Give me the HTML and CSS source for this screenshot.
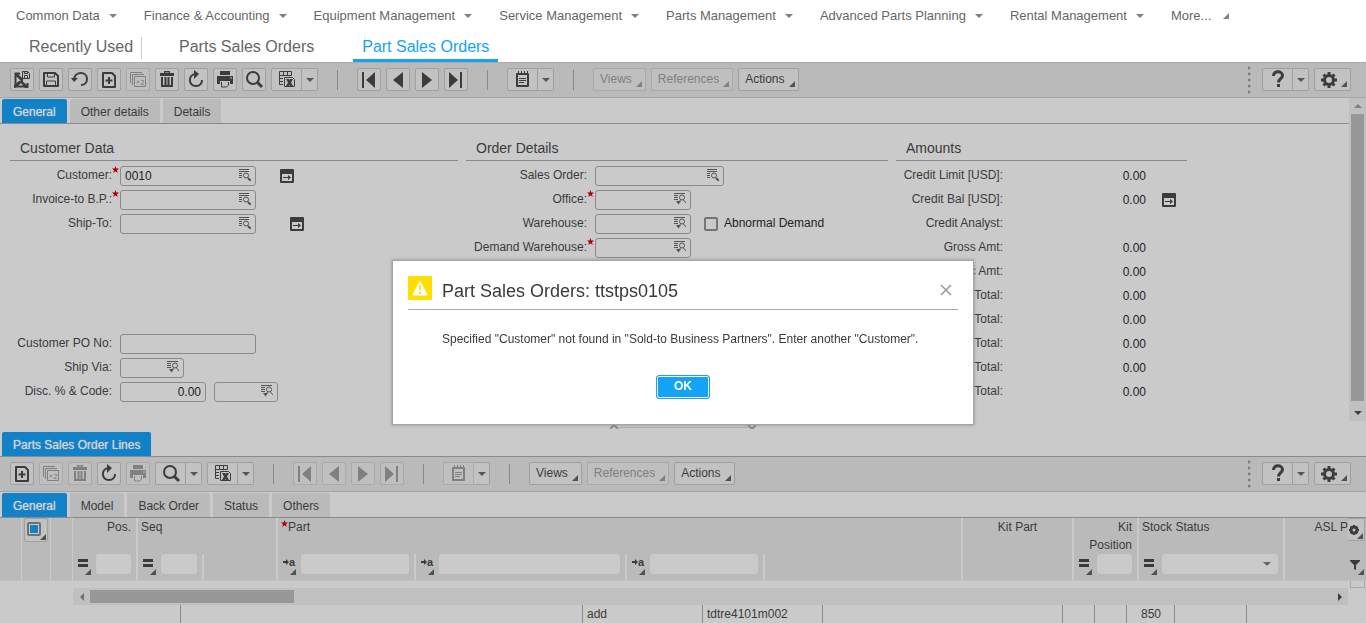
FILE: index.html
```html
<!DOCTYPE html>
<html lang="en">
<head>
<meta charset="utf-8">
<title>Part Sales Orders</title>
<link rel="stylesheet" href="styles.css">
</head>
<body>
<svg class="defs" aria-hidden="true">
  <symbol id="i-saveexit" viewBox="0 0 22 22"><path d="M9 4.500H4.500v13h12V14" fill="none" stroke="currentColor" stroke-width="2"/><path d="M4 5h3l4 4 1-1v5h-1l-4-4-3-3zM3 19v-3l5-4h2l1 1-5 5zM11 12l6 5v2h-3l-4-5z" fill="currentColor"/><path d="M11.500 2.500h5l2 2v5h-7zM13.500 2.500v2h3v-2M13.500 9.500v-3h3v3" fill="none" stroke="currentColor"/></symbol>
  <symbol id="i-save" viewBox="0 0 22 22"><path d="M4 4h11l3 3v10H4z" fill="none" stroke="currentColor" stroke-width="2" stroke-linejoin="round"/><path d="M7.500 4v4h7V4M6.500 17v-5h9v5" fill="none" stroke="currentColor"/></symbol>
  <symbol id="i-undo" viewBox="0 0 22 22"><path d="M5 10C6 2 18 2 18 10c0 4-3 6-6 6" fill="none" stroke="currentColor" stroke-width="2"/><path d="M2 9h7l-4 4z" fill="currentColor"/></symbol>
  <symbol id="i-new" viewBox="0 0 22 22"><path d="M5 4h9l3 3v11H5z" fill="none" stroke="currentColor" stroke-width="2" stroke-linejoin="round"/><path d="M11 8v7M7.500 11.500h7" stroke="currentColor" stroke-width="2"/></symbol>
  <symbol id="i-copy" viewBox="0 0 22 22"><path d="M3.500 14V3.500H15M5.500 16V5.500H17M7.500 7.500h11v10h-11z" fill="none" stroke="currentColor"/><path d="M9.500 11.500l3 3m0-3l-3 3M14 11.500h2.500V13L14 15.500h3" fill="none" stroke="currentColor" stroke-width=".8"/></symbol>
  <symbol id="i-trash" viewBox="0 0 22 22"><path d="M4 4h4V2h6v2h4v3H4zM9 3.500V4h4v-.5z" fill="currentColor" fill-rule="evenodd"/><path d="M6 8v9h10V8M9.500 8v8M12.500 8v8" fill="none" stroke="currentColor" stroke-width="2"/></symbol>
  <symbol id="i-refresh" viewBox="0 0 22 22"><path d="M10 5c-7 1-7 12 1 12 4 0 6-3 6-6" fill="none" stroke="currentColor" stroke-width="2"/><path d="M9 1l5 4-5 5z" fill="currentColor"/></symbol>
  <symbol id="i-print" viewBox="0 0 22 22"><path d="M6 2h10v4H6zM3 7h16v8h-3v-3H6v3H3z" fill="currentColor"/><path d="M7.500 13v5h5l2-2v-3" fill="none" stroke="currentColor"/><path d="M16 9h2" stroke="#c2c2c2"/></symbol>
  <symbol id="i-search" viewBox="0 0 22 22"><circle cx="10" cy="9" r="6" fill="none" stroke="currentColor" stroke-width="2"/><path d="M14 13l5 5" stroke="currentColor" stroke-width="3"/></symbol>
  <symbol id="i-excel" viewBox="0 0 22 22"><path d="M3.500 2.500h12v4h-12zM3.500 6.500v9H7M3.500 9.500H7M3.500 12.500H7M7.500 2.500v4M11.500 2.500v4" fill="none" stroke="currentColor"/><path d="M8.500 8.500h8l2 2v7h-10z" fill="none" stroke="currentColor"/><path d="M10 10h3l.5 1.500L14 10h3l-2 3.500 2 3.500h-3l-.5-1.500L13 17h-3l2-3.500z" fill="currentColor"/></symbol>
  <symbol id="i-first" viewBox="0 0 22 22"><path d="M4 3h2v16H4zM17 3v16l-9-8z" fill="currentColor"/></symbol>
  <symbol id="i-prev" viewBox="0 0 22 22"><path d="M16 3v16l-10-8z" fill="currentColor"/></symbol>
  <symbol id="i-next" viewBox="0 0 22 22"><path d="M6 3v16l10-8z" fill="currentColor"/></symbol>
  <symbol id="i-last" viewBox="0 0 22 22"><path d="M4 3v16l9-8zM15 3h2v16h-2z" fill="currentColor"/></symbol>
  <symbol id="i-note" viewBox="0 0 22 22"><path d="M5 5h11v12H5z" fill="none" stroke="currentColor" stroke-width="2" stroke-linejoin="round"/><path d="M6.500 2v3M9.500 2v3M12.500 2v3M15.500 2v3M7 9.500h7M7 11.500h7M7 13.500h5" stroke="currentColor"/></symbol>
  <symbol id="i-help" viewBox="0 0 22 22"><path d="M6.500 7c0-6 9-5 9-.5 0 3-4 3.500-4 7" fill="none" stroke="currentColor" stroke-width="3"/><path d="M10 15h3v3h-3z" fill="currentColor"/></symbol>
  <symbol id="i-gear" viewBox="0 0 22 22"><circle cx="11" cy="11" r="4.500" fill="none" stroke="currentColor" stroke-width="3"/><path d="M11 3v3M11 16v3M3 11h3M16 11h3M5.500 5.500l2 2M14.500 14.500l2 2M5.500 16.500l2-2M14.500 7.500l2-2" stroke="currentColor" stroke-width="3"/></symbol>
  <symbol id="i-smallgear" viewBox="0 0 12 12"><circle cx="6" cy="6" r="3" fill="none" stroke="currentColor" stroke-width="3"/><path d="M6 1v2M6 9v2M1 6h2M9 6h2M2.500 2.500l1 1M8.500 8.500l1 1M2.500 9.500l1-1M8.500 3.500l1-1" stroke="currentColor" stroke-width="2"/></symbol>
  <symbol id="i-caret" viewBox="0 0 8 4"><path d="M0 0h8L4 4z" fill="currentColor"/></symbol>
  <symbol id="i-corner" viewBox="0 0 6 6"><path d="M6 0v6H0z" fill="currentColor"/></symbol>
  <symbol id="i-zoom" viewBox="0 0 12 12"><path d="M0 .5h10M0 2.500h10M0 4.500h3M0 6.500h3M0 8.500h3" stroke="currentColor"/><circle cx="7" cy="6.500" r="2.500" fill="none" stroke="currentColor"/><path d="M9 9l3 3" stroke="currentColor" stroke-width="2"/></symbol>
  <symbol id="i-pick" viewBox="0 0 12 12"><path d="M0 .5h11M0 2.500h4M0 4.500h4M0 6.500h4" stroke="currentColor"/><circle cx="8" cy="4.500" r="2.500" fill="none" stroke="currentColor"/><path d="M9.500 7L12 10M6.500 7L4 10" stroke="currentColor"/><path d="M2 8h5l-2.500 3.500z" fill="currentColor"/></symbol>
  <symbol id="i-goto" viewBox="0 0 14 14"><path d="M1 1h12v12H1z" fill="none" stroke="currentColor" stroke-width="2" stroke-linejoin="round"/><path d="M1 1h12v4H1z" fill="currentColor"/><path d="M3 8.500h6" stroke="currentColor"/><path d="M8 6l3 2.500L8 11z" fill="currentColor"/></symbol>
  <symbol id="i-star" viewBox="0 0 10 10"><path d="M5 0l1.300 3.500H10L7.200 5.900 8.200 10 5 7.500 1.800 10l1-4.100L0 3.500h3.700z" fill="currentColor"/></symbol>
  <symbol id="i-eq" viewBox="0 0 12 12"><path d="M1 2h10v3H1zM1 7h10v3H1z" fill="currentColor"/></symbol>
  <symbol id="i-toarrow" viewBox="0 0 6 6"><path d="M0 2h3V0l3 3-3 3V4H0z" fill="currentColor"/></symbol>
  <symbol id="i-funnel" viewBox="0 0 10 10"><path d="M0 0h10v1L6 5v5L4 9V5L0 1z" fill="currentColor"/></symbol>
</svg>

<nav class="menu" aria-label="Main menu">
  <button>Common Data<svg class="caret"><use href="#i-caret"/></svg></button>
  <button>Finance &amp; Accounting<svg class="caret"><use href="#i-caret"/></svg></button>
  <button>Equipment Management<svg class="caret"><use href="#i-caret"/></svg></button>
  <button>Service Management<svg class="caret"><use href="#i-caret"/></svg></button>
  <button>Parts Management<svg class="caret"><use href="#i-caret"/></svg></button>
  <button>Advanced Parts Planning<svg class="caret"><use href="#i-caret"/></svg></button>
  <button>Rental Management<svg class="caret"><use href="#i-caret"/></svg></button>
  <button class="more">More...<svg class="corner"><use href="#i-corner"/></svg></button>
</nav>

<nav class="sessions" aria-label="Sessions">
  <a class="recent" href="#">Recently Used</a>
  <a href="#">Parts Sales Orders</a>
  <a class="active" href="#">Part Sales Orders</a>
</nav>

<main>
<div class="toolbar">
  <button class="tb" aria-label="Save and exit"><svg><use href="#i-saveexit"/></svg></button>
  <button class="tb" aria-label="Save"><svg><use href="#i-save"/></svg></button>
  <button class="tb" aria-label="Undo"><svg><use href="#i-undo"/></svg></button>
  <button class="tb" aria-label="New"><svg><use href="#i-new"/></svg></button>
  <button class="tb" aria-label="Duplicate" disabled><svg><use href="#i-copy"/></svg></button>
  <button class="tb" aria-label="Delete"><svg><use href="#i-trash"/></svg></button>
  <button class="tb" aria-label="Refresh"><svg><use href="#i-refresh"/></svg></button>
  <button class="tb" aria-label="Print"><svg><use href="#i-print"/></svg></button>
  <button class="tb" aria-label="Find"><svg><use href="#i-search"/></svg></button>
  <span class="split"><button class="tb" aria-label="Export"><svg><use href="#i-excel"/></svg></button><button class="tb drop" aria-label="Export options"><svg class="caret"><use href="#i-caret"/></svg></button></span>
  <span class="sep"></span>
  <button class="tb" aria-label="First"><svg><use href="#i-first"/></svg></button>
  <button class="tb" aria-label="Previous"><svg><use href="#i-prev"/></svg></button>
  <button class="tb" aria-label="Next"><svg><use href="#i-next"/></svg></button>
  <button class="tb" aria-label="Last"><svg><use href="#i-last"/></svg></button>
  <span class="sep"></span>
  <span class="split"><button class="tb" aria-label="Notes"><svg><use href="#i-note"/></svg></button><button class="tb drop" aria-label="Notes options"><svg class="caret"><use href="#i-caret"/></svg></button></span>
  <span class="sep"></span>
  <button class="tb text" disabled>Views<svg class="corner"><use href="#i-corner"/></svg></button>
  <button class="tb text" disabled>References<svg class="corner"><use href="#i-corner"/></svg></button>
  <button class="tb text">Actions<svg class="corner"><use href="#i-corner"/></svg></button>
  <span class="grip"></span>
  <span class="split"><button class="tb" aria-label="Help"><svg><use href="#i-help"/></svg></button><button class="tb drop" aria-label="Help options"><svg class="caret"><use href="#i-caret"/></svg></button></span>
  <button class="tb gear" aria-label="Settings"><svg><use href="#i-gear"/></svg><svg class="corner"><use href="#i-corner"/></svg></button>
</div>

<div class="form-area">
  <div class="form-main">
    <div class="tabs" role="tablist">
      <button role="tab" aria-selected="true">General</button>
      <button role="tab">Other details</button>
      <button role="tab">Details</button>
    </div>
    <form class="form">
      <section class="customer">
        <h2>Customer Data</h2>
        <div class="row"><label for="cust">Customer:</label><svg class="star"><use href="#i-star"/></svg><span class="field w-l"><input id="cust" value="0010"><button type="button" aria-label="Look up"><svg><use href="#i-zoom"/></svg></button></span><button type="button" class="goto" aria-label="Customer details"><svg><use href="#i-goto"/></svg></button></div>
        <div class="row"><label for="inv">Invoice-to B.P.:</label><svg class="star"><use href="#i-star"/></svg><span class="field w-l"><input id="inv"><button type="button" aria-label="Look up"><svg><use href="#i-zoom"/></svg></button></span></div>
        <div class="row"><label for="ship">Ship-To:</label><i class="star"></i><span class="field w-l"><input id="ship"><button type="button" aria-label="Look up"><svg><use href="#i-zoom"/></svg></button></span><button type="button" class="goto far" aria-label="Ship-to details"><svg><use href="#i-goto"/></svg></button></div>
        <div class="row spaced"><label for="po">Customer PO No:</label><i class="star"></i><span class="field w-l"><input id="po"></span></div>
        <div class="row"><label for="via">Ship Via:</label><i class="star"></i><span class="field w-xs"><input id="via"><button type="button" aria-label="Look up"><svg><use href="#i-pick"/></svg></button></span></div>
        <div class="row"><label for="disc">Disc. % &amp; Code:</label><i class="star"></i><span class="field w-s"><input id="disc" class="num" value="0.00"></span><span class="field w-xs second"><input aria-label="Discount code"><button type="button" aria-label="Look up"><svg><use href="#i-pick"/></svg></button></span></div>
      </section>
      <section class="order">
        <h2>Order Details</h2>
        <div class="row"><label for="so">Sales Order:</label><i class="star"></i><span class="field w-ml"><input id="so"><button type="button" aria-label="Look up"><svg><use href="#i-zoom"/></svg></button></span></div>
        <div class="row"><label for="off">Office:</label><svg class="star"><use href="#i-star"/></svg><span class="field w-m"><input id="off"><button type="button" aria-label="Look up"><svg><use href="#i-pick"/></svg></button></span></div>
        <div class="row"><label for="wh">Warehouse:</label><i class="star"></i><span class="field w-m"><input id="wh"><button type="button" aria-label="Look up"><svg><use href="#i-pick"/></svg></button></span><input type="checkbox" id="abn" class="check"><label for="abn" class="check-label">Abnormal Demand</label></div>
        <div class="row"><label for="dwh">Demand Warehouse:</label><svg class="star"><use href="#i-star"/></svg><span class="field w-m"><input id="dwh"><button type="button" aria-label="Look up"><svg><use href="#i-pick"/></svg></button></span></div>
      </section>
      <section class="amounts">
        <h2>Amounts</h2>
        <div class="row"><label>Credit Limit [USD]:</label><output>0.00</output></div>
        <div class="row"><label>Credit Bal [USD]:</label><output>0.00</output><button type="button" class="goto near" aria-label="Credit balance details"><svg><use href="#i-goto"/></svg></button></div>
        <div class="row"><label>Credit Analyst:</label></div>
        <div class="row"><label>Gross Amt:</label><output>0.00</output></div>
        <div class="row"><label>Disc Amt:</label><output>0.00</output></div>
        <div class="row"><label>Total:</label><output>0.00</output></div>
        <div class="row"><label>Total:</label><output>0.00</output></div>
        <div class="row"><label>Total:</label><output>0.00</output></div>
        <div class="row"><label>Total:</label><output>0.00</output></div>
        <div class="row"><label>Total:</label><output>0.00</output></div>
      </section>
    </form>
  </div>
  <div class="vscroll"><svg class="caret up"><use href="#i-caret"/></svg><span class="thumb"></span><svg class="caret down"><use href="#i-caret"/></svg></div>
</div>

<div class="splitter"><svg viewBox="0 0 146 4"><path d="M0 4l4-4 4 4M138 0l4 4 4-4" fill="none" stroke="#8a8a8a" stroke-width="2"/><path d="M8 2.500h130" stroke="#b0b0b0"/></svg></div>

<div class="tabs lines-tab" role="tablist"><button role="tab" aria-selected="true">Parts Sales Order Lines</button></div>

<div class="toolbar flat">
  <button class="tb" aria-label="New line"><svg><use href="#i-new"/></svg></button>
  <button class="tb" aria-label="Duplicate line" disabled><svg><use href="#i-copy"/></svg></button>
  <button class="tb" aria-label="Delete line" disabled><svg><use href="#i-trash"/></svg></button>
  <button class="tb" aria-label="Refresh lines"><svg><use href="#i-refresh"/></svg></button>
  <button class="tb" aria-label="Print lines" disabled><svg><use href="#i-print"/></svg></button>
  <span class="split"><button class="tb" aria-label="Find line"><svg><use href="#i-search"/></svg></button><button class="tb drop" aria-label="Find options"><svg class="caret"><use href="#i-caret"/></svg></button></span>
  <span class="split"><button class="tb" aria-label="Export lines"><svg><use href="#i-excel"/></svg></button><button class="tb drop" aria-label="Export options"><svg class="caret"><use href="#i-caret"/></svg></button></span>
  <span class="sep"></span>
  <button class="tb" aria-label="First" disabled><svg><use href="#i-first"/></svg></button>
  <button class="tb" aria-label="Previous" disabled><svg><use href="#i-prev"/></svg></button>
  <button class="tb" aria-label="Next" disabled><svg><use href="#i-next"/></svg></button>
  <button class="tb" aria-label="Last" disabled><svg><use href="#i-last"/></svg></button>
  <span class="sep"></span>
  <span class="split"><button class="tb" aria-label="Notes" disabled><svg><use href="#i-note"/></svg></button><button class="tb drop" aria-label="Notes options"><svg class="caret"><use href="#i-caret"/></svg></button></span>
  <span class="sep"></span>
  <button class="tb text">Views<svg class="corner"><use href="#i-corner"/></svg></button>
  <button class="tb text" disabled>References<svg class="corner"><use href="#i-corner"/></svg></button>
  <button class="tb text">Actions<svg class="corner"><use href="#i-corner"/></svg></button>
  <span class="grip"></span>
  <span class="split"><button class="tb" aria-label="Help"><svg><use href="#i-help"/></svg></button><button class="tb drop" aria-label="Help options"><svg class="caret"><use href="#i-caret"/></svg></button></span>
  <button class="tb gear" aria-label="Settings"><svg><use href="#i-gear"/></svg><svg class="corner"><use href="#i-corner"/></svg></button>
</div>

<div class="tabs" role="tablist">
  <button role="tab" aria-selected="true">General</button>
  <button role="tab">Model</button>
  <button role="tab">Back Order</button>
  <button role="tab">Status</button>
  <button role="tab">Others</button>
</div>

<div class="grid-head">
  <table class="heads">
    <colgroup><col class="c22"><col class="c29"><col class="c22"><col class="c65"><col class="c66"><col class="c74"><col class="c138"><col class="c211"><col class="c138"><col class="c198"><col class="c111"><col class="c65"><col class="c146"><col></colgroup>
    <tr class="names">
      <th class="thin"></th>
      <th class="thin pick"><button class="tb all" aria-label="Select all"><span class="box"></span><svg class="corner"><use href="#i-corner"/></svg></button></th>
      <th class="thin"></th>
      <th class="right">Pos.</th>
      <th colspan="2">Seq</th>
      <th colspan="4" class="req"><svg class="star"><use href="#i-star"/></svg>Part</th>
      <th class="center">Kit Part</th>
      <th class="right">Kit Position</th>
      <th>Stock Status</th>
      <th class="clip">ASL P</th>
    </tr>
    <tr class="filters">
      <td class="thin"></td><td class="thin"></td><td class="thin"></td>
      <td><div class="filter"><button aria-label="Operator"><svg><use href="#i-eq"/></svg><svg class="corner"><use href="#i-corner"/></svg></button><input aria-label="Filter position"></div></td>
      <td><div class="filter"><button aria-label="Operator"><svg><use href="#i-eq"/></svg><svg class="corner"><use href="#i-corner"/></svg></button><input aria-label="Filter sequence"></div></td>
      <td></td>
      <td><div class="filter"><button class="a" aria-label="Operator"><svg class="to"><use href="#i-toarrow"/></svg><b>a</b><svg class="corner"><use href="#i-corner"/></svg></button><input aria-label="Filter part project"></div></td>
      <td><div class="filter"><button class="a" aria-label="Operator"><svg class="to"><use href="#i-toarrow"/></svg><b>a</b><svg class="corner"><use href="#i-corner"/></svg></button><input aria-label="Filter part"></div></td>
      <td><div class="filter"><button class="a" aria-label="Operator"><svg class="to"><use href="#i-toarrow"/></svg><b>a</b><svg class="corner"><use href="#i-corner"/></svg></button><input aria-label="Filter description"></div></td>
      <td></td>
      <td></td>
      <td><div class="filter"><button aria-label="Operator"><svg><use href="#i-eq"/></svg><svg class="corner"><use href="#i-corner"/></svg></button><input aria-label="Filter kit position"></div></td>
      <td><div class="filter"><button aria-label="Operator"><svg><use href="#i-eq"/></svg><svg class="corner"><use href="#i-corner"/></svg></button><span class="select"><select aria-label="Filter stock status"><option></option></select><svg class="caret"><use href="#i-caret"/></svg></span></div></td>
      <td></td>
    </tr>
  </table>
  <div class="side">
    <button class="tb" aria-label="Grid settings"><svg class="g"><use href="#i-smallgear"/></svg><svg class="corner"><use href="#i-corner"/></svg></button>
    <button class="bare" aria-label="Filter"><svg class="f"><use href="#i-funnel"/></svg><svg class="corner"><use href="#i-corner"/></svg></button>
  </div>
</div>
<div class="gap"><span class="mini"></span></div>
<div class="hscroll"><svg class="caret left"><use href="#i-caret"/></svg><span class="thumb"></span><svg class="caret rightward"><use href="#i-caret"/></svg></div>
<table class="rows">
  <colgroup><col class="r181"><col class="r402"><col class="r120"><col class="r120"><col class="r240"><col class="r32"><col class="r32"><col class="r48"><col class="r72"><col></colgroup>
  <tr><td></td><td></td><td>add</td><td>tdtre4101m002</td><td></td><td></td><td></td><td class="qty">850</td><td></td><td></td></tr>
</table>
</main>

<div class="dialog" role="dialog" aria-labelledby="dlg-title" aria-modal="true">
  <header>
    <svg class="warn" viewBox="0 0 24 24"><rect width="24" height="24" rx="1" fill="#ffde00"/><path d="M12 5l7 14H5z" fill="#fff" stroke="#fff" stroke-linejoin="round"/><path d="M11 9h2l-.5 6h-1zM11 16h2v2h-2z" fill="#ffde00"/></svg>
    <h1 id="dlg-title">Part Sales Orders: ttstps0105</h1>
    <button class="close" aria-label="Close"><svg viewBox="0 0 12 12"><path d="M1 1l10 10M11 1L1 11" stroke="#999" stroke-width="1.500"/></svg></button>
  </header>
  <p>Specified "Customer" not found in "Sold-to Business Partners". Enter another "Customer".</p>
  <button class="ok">OK</button>
</div>
</body>
</html>
```

FILE: styles.css
```css
* { box-sizing: border-box; }
html, body { margin: 0; height: 100%; }
body { font: 12px/18px "Liberation Sans", Arial, sans-serif; color: #3a3a3a; background: #cacaca; overflow: hidden; }
button, input, select { font: inherit; color: inherit; margin: 0; padding: 0; border: 0; background: none; border-radius: 0; }
svg { display: block; flex: none; }
.defs { position: absolute; width: 0; height: 0; }
.caret { width: 8px; height: 4px; }
.corner { width: 6px; height: 6px; }

.menu { display: flex; gap: 27px; height: 32px; padding: 0 16px; background: #fff; color: #666; font-size: 13px; white-space: nowrap; }
.menu button { display: flex; align-items: center; gap: 9px; }
.menu .caret, .menu .corner { color: #808080; }
.menu .more { gap: 12px; }

.sessions { display: flex; align-items: stretch; gap: 30px; height: 30px; padding-left: 20px; background: #fff; font-size: 16px; white-space: nowrap; }
.sessions a { padding: 0 9px; line-height: 30px; color: #666; text-decoration: none; }
.sessions .recent { margin: 5px -2px 3px 0; padding-right: 8px; line-height: 20px; border-right: 1px solid #ccc; }
.sessions .active { color: #13a3f7; border-bottom: 3px solid #13a3f7; }

.toolbar { display: flex; align-items: center; gap: 5px; height: 36px; padding: 0 15px 1px 10px; background: #bababa; border-top: 1px solid #aaa; border-bottom: 1px solid #a4a4a4; }
.toolbar.flat { height: 35px; border-top: 0; }
.tb { position: relative; display: flex; align-items: center; justify-content: center; width: 24px; height: 23px; flex: none; border: 1px solid #a0a0a0; border-radius: 2px; background: #c2c2c2; color: #3c3c3c; }
.tb:disabled { color: #808080; background: #bfbfbf; border-color: #aaa; }
.tb > svg:first-child:not(.caret):not(.corner) { width: 22px; height: 22px; }
.tb .corner { position: absolute; right: 3px; bottom: 3px; color: #505050; }
.tb:disabled .corner { color: #808080; }
.split { display: flex; }
.split .tb { width: 31px; border-radius: 2px 0 0 2px; }
.split .drop { width: 16px; border-left: 0; border-radius: 0 2px 2px 0; color: #555; }
.split .tb:disabled { border-color: #aaa; }
.sep { width: 1px; height: 20px; margin: 0 14px; background: #888; }
.tb.text { width: auto; padding: 0 13px 2px 6px; }
.tb.gear { width: 37px; justify-content: flex-start; padding-left: 3px; }
.grip { width: 3px; height: 28px; margin-left: auto; margin-right: 6px; background: radial-gradient(circle at 1px 2px, #808080 1px, transparent 2px) 0 0 / 3px 6px; }

.tabs { display: flex; gap: 3px; height: 26px; padding: 1px 2px 0; border-bottom: 1px solid #8a8a8a; }
.tabs button { padding: 1px 11px 0; border-radius: 2px 2px 0 0; background: #bababa; }
.tabs button[aria-selected="true"] { background: #1181c8; color: #d2d2d2; text-shadow: 0 0 1px #d2d2d2; }
.lines-tab { height: 25px; padding-top: 0; }

.form-area { display: flex; }
.form-main { flex: 1; min-width: 0; }
.form { display: flex; gap: 8px; padding: 12px 10px 17px; }
.customer { width: 448px; }
.order { width: 422px; }
.amounts { width: 291px; }
.form h2 { margin: 0 0 3px; padding: 3px 10px; border-bottom: 1px solid #8a8a8a; font-size: 14px; font-weight: 400; line-height: 18px; }
.row { display: flex; height: 24px; align-items: center; }
.row > label:first-child { width: 102px; padding-bottom: 2px; text-align: right; white-space: nowrap; }
.order .row > label:first-child { width: 121px; }
.amounts .row > label:first-child { width: 107px; }
.spaced { margin-top: 96px; }
.star { width: 7px; height: 7px; margin: 0 1px 0 0; align-self: flex-start; color: #b00000; }
.row .star { margin-top: 2px; }
.field { display: flex; height: 20px; border: 1px solid #8a8a8a; border-radius: 3px; padding-right: 4px; }
.field input { flex: 1; min-width: 0; padding: 0 4px; color: #222; outline: 0; }
.field .num { padding: 0; text-align: right; }
.field button { width: 12px; height: 15px; color: #555; }
.field svg { width: 12px; height: 12px; }
.w-l { width: 136px; }
.w-ml { width: 129px; }
.w-m { width: 96px; }
.w-s { width: 86px; }
.w-xs { width: 64px; }
.second { margin-left: 8px; }
.goto { width: 14px; height: 14px; margin-left: 24px; color: #3c3c3c; }
.goto svg { width: 14px; height: 14px; }
.goto.far { margin-left: 34px; }
.goto.near { margin-left: 16px; }
.check { appearance: none; width: 14px; height: 14px; margin-left: 13px; border: 2px solid #757575; border-radius: 2px; }
.check-label { padding: 0 0 2px 6px; color: #222; }
output { width: 143px; text-align: right; color: #222; }

.vscroll { display: flex; flex-direction: column; align-items: center; width: 17px; padding: 6px 0; background: #c0c0c0; }
.vscroll .thumb { flex: 1; width: 13px; margin: 6px 0 10px; background: #989898; }
.up { transform: rotate(180deg); color: #808080; }
.splitter { display: flex; justify-content: center; height: 11px; padding-top: 4px; }
.splitter svg { width: 146px; height: 4px; }

.grid-head { display: flex; background: #bababa; border-bottom: 1px solid #c2c2c2; }
.heads { flex: 1; width: 0; table-layout: fixed; border-collapse: separate; border-spacing: 0; }
.heads th, .heads td { padding: 0; font-weight: 400; text-align: left; vertical-align: top; border-right: 2px solid #cacaca; }
.heads .thin { border-right-width: 1px; }
.heads tr > :last-child { border-right: 0; }
.names th { height: 36px; padding: 0 3px; }
.heads .names .right { text-align: right; padding-right: 5px; }
.heads .names .center { text-align: center; }
.heads .names .pick { padding: 0 2px; }
.heads .names .clip { text-align: right; white-space: nowrap; padding-right: 0; }
.names .star { float: left; margin: 2px 0 0; }
.filters td { height: 26px; }
.filter { display: flex; gap: 1px; padding: 0 5px 0 3px; }
.filter > button { position: relative; width: 19px; height: 22px; flex: none; display: flex; align-items: flex-start; padding: 3px 1px; }
.filter > button.a { padding-left: 2px; }
.filter > button > svg:first-child { width: 12px; height: 12px; }
.filter > button > svg.to:first-child { width: 6px; height: 6px; margin-top: 2px; }
.filter b { font-size: 11px; line-height: 10px; }
.filter .corner { position: absolute; right: 4px; bottom: 1px; color: #505050; }
.filter input, .select { flex: 1; min-width: 0; height: 20px; border-radius: 3px; background: #cacaca; }
.select { display: flex; align-items: center; padding-right: 7px; }
.select select { flex: 1; min-width: 0; appearance: none; }
.select .caret { color: #666; }
.tb.all { width: 24px; height: 24px; }
.box { width: 14px; height: 14px; margin: -3px 4px 0 0; border: 2px solid #707070; border-radius: 2px; background: #1181c8; box-shadow: inset 0 0 0 1px #cacaca; }
.tb.all .corner { right: 1px; bottom: 1px; }
.c22 { width: 22px; } .c29 { width: 29px; } .c65 { width: 65px; } .c66 { width: 66px; } .c74 { width: 74px; }
.c111 { width: 111px; } .c138 { width: 138px; } .c146 { width: 146px; } .c198 { width: 198px; } .c211 { width: 211px; }
.side { width: 18px; display: flex; flex-direction: column; gap: 13px; }
.side .tb { width: 17px; border-left: 0; }
.side .tb > svg.g:first-child:not(.caret):not(.corner) { width: 12px; height: 12px; margin-right: 4px; }
.side .corner { position: absolute; right: 1px; bottom: 1px; color: #505050; }
.bare { position: relative; width: 17px; height: 22px; }
.bare .f { width: 10px; height: 10px; margin-left: 2px; }

.gap { display: flex; justify-content: flex-end; height: 7px; }
.mini { width: 15px; margin-right: 1px; border: solid #aaa; border-width: 0 1px 1px; }
.hscroll { display: flex; align-items: center; height: 17px; margin: 0 18px 0 73px; padding: 0 4px; background: #c0c0c0; }
.hscroll .thumb { width: 204px; height: 13px; margin: 0 auto 0 3px; background: #989898; }
.left { width: 10px; transform: rotate(90deg); color: #707070; }
.rightward { transform: rotate(-90deg); color: #3c3c3c; }
.down { color: #3c3c3c; }

.rows { width: 100%; table-layout: fixed; border-collapse: separate; border-spacing: 0; }
.rows td { height: 18px; padding: 0 4px; border-right: 1px solid #8a8a8a; white-space: nowrap; }
.rows td:last-child { border-right: 0; }
.rows .qty { text-align: right; padding-right: 13px; }
.r181 { width: 181px; } .r402 { width: 402px; } .r120 { width: 120px; } .r240 { width: 240px; }
.r32 { width: 32px; } .r48 { width: 48px; } .r72 { width: 72px; }

.dialog { position: fixed; top: 260px; left: 0; right: 0; width: 582px; margin: 0 auto; padding: 15px; background: #fff; border: 1px solid #a5a5a5; box-shadow: 0 0 3px #888; }
.dialog header { display: flex; align-items: flex-start; gap: 10px; height: 34px; border-bottom: 1px solid #aaa; }
.warn { width: 24px; height: 24px; }
.dialog h1 { flex: 1; margin: 4px 0 0; font-size: 18px; line-height: 22px; font-weight: 400; }
.close { width: 12px; height: 12px; margin: 8px 6px 0 0; }
.close svg { width: 12px; height: 12px; }
.dialog p { margin: 20px 34px 27px; white-space: nowrap; }
.ok { display: block; width: 54px; height: 24px; margin: 0 auto 10px; padding-bottom: 2px; border: 1px solid #13a3f7; border-radius: 3px; background: #13a3f7; box-shadow: inset 0 0 0 1px #fff; color: #fff; font-weight: 700; line-height: 18px; }
```
